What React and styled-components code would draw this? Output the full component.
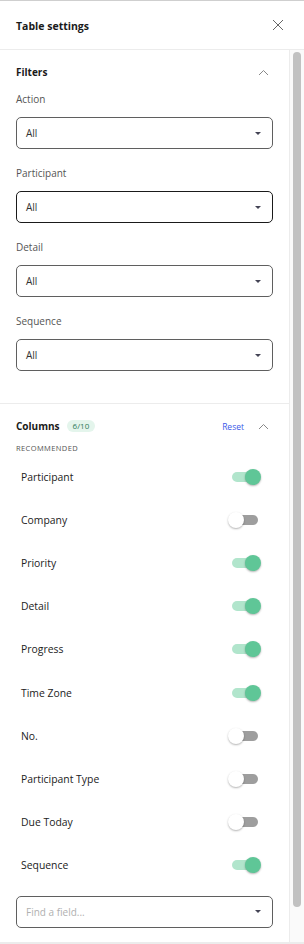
import React from "react";
import styled, { createGlobalStyle } from "styled-components";

const Global = createGlobalStyle`
  html, body { margin: 0; padding: 0; background: #fff; }
  body { font-family: "Open Sans", "Noto Sans", sans-serif; color: #1f1f1f; }
  * { box-sizing: border-box; }
`;

const Panel = styled.div`
  width: 304px;
  height: 944px;
  display: flex;
  flex-direction: column;
  border-top: 1px solid #cfcfcf;
  border-bottom: 2px solid #ececec;
  background: #fff;
`;

const Header = styled.div`
  height: 49px;
  flex: none;
  display: flex;
  align-items: center;
  justify-content: space-between;
  padding: 0 16px;
  border-bottom: 1px solid #ececec;
`;

const Title = styled.div`
  font-size: 10.5px;
  font-weight: 700;
  color: #1a1a1a;
  margin-top: 1px;
`;

const IconButton = styled.button`
  border: 0;
  background: none;
  padding: 0;
  width: 14px;
  height: 14px;
  display: flex;
  align-items: center;
  justify-content: center;
  color: #666;
  margin-right: 3px;
`;

const Body = styled.div`
  flex: 1;
  display: flex;
  min-height: 0;
`;

const Content = styled.div`
  flex: 1;
  display: flex;
  flex-direction: column;
`;

const Section = styled.section`
  padding: ${(p) => p.$pad};
  border-bottom: ${(p) => (p.$divider ? "1px solid #ececec" : "none")};
`;

const SectionHead = styled.div`
  height: ${(p) => p.$h}px;
  display: flex;
  align-items: center;
  gap: 7px;
`;

const SectionTitle = styled.div`
  font-size: 10px;
  font-weight: 700;
  color: #1a1a1a;
`;

const Badge = styled.span`
  font-size: 8px;
  color: #2c7a56;
  background: #e4f5ec;
  border-radius: 6px;
  padding: 0 6px;
  height: 12px;
  line-height: 12px;
`;

const Spacer = styled.div`
  flex: 1;
`;

const ResetLink = styled.span`
  font-size: 8.5px;
  color: #3b57e8;
  margin-right: 7px;
`;

const Chevron = styled.span`
  display: flex;
  color: #888;
  margin-right: 4px;
`;

const Field = styled.div`
  margin-top: ${(p) => p.$mt}px;
`;

const Label = styled.div`
  font-size: 10px;
  line-height: 14px;
  color: #555;
  margin-bottom: 11px;
`;

const SelectBox = styled.div`
  height: 32px;
  border: 1px solid ${(p) => (p.$focused ? "#1a1a1a" : "#5f5f5f")};
  border-radius: 5px;
  display: flex;
  align-items: center;
  justify-content: space-between;
  padding: 0 11px 0 9px;
  font-size: 10px;
  color: ${(p) => (p.$placeholder ? "#b0b0b0" : "#333")};
  margin: ${(p) => p.$margin || "0"};
`;

const Caret = styled.span`
  width: 0;
  height: 0;
  border-left: 3.5px solid transparent;
  border-right: 3.5px solid transparent;
  border-top: 3px solid #445;
`;

const SubHeading = styled.div`
  font-size: 7.5px;
  letter-spacing: 0.4px;
  color: #555;
  margin: 7px 0 2px;
  line-height: 10px;
`;

const Row = styled.div`
  height: 43.2px;
  display: flex;
  align-items: center;
  justify-content: space-between;
  padding: 0 12px 0 5px;
  font-size: 10.4px;
  color: #222;
`;

const Track = styled.span`
  position: relative;
  width: 26px;
  height: 10px;
  border-radius: 5px;
  background: ${(p) => (p.$on ? "#b1e5cc" : "#9e9e9e")};
  margin-right: 3px;
`;

const Thumb = styled.span`
  position: absolute;
  top: -3px;
  left: ${(p) => (p.$on ? "13px" : "-4px")};
  width: 16px;
  height: 16px;
  border-radius: 50%;
  background: ${(p) => (p.$on ? "#5fc697" : "#fff")};
  box-shadow: 0 1px 2px rgba(0, 0, 0, 0.3);
`;

const Scrollbar = styled.div`
  width: 15px;
  flex: none;
  border-left: 1px solid #ececec;
  background: #fafafa;
  padding: 2px 3px 35px 3px;
  display: flex;
`;

const ScrollThumb = styled.div`
  flex: 1;
  border-radius: 5px;
  background: #c1c1c1;
`;

const filters = [
  { label: "Action" },
  { label: "Participant", focused: true },
  { label: "Detail" },
  { label: "Sequence" },
];

const columns = [
  ["Participant", true],
  ["Company", false],
  ["Priority", true],
  ["Detail", true],
  ["Progress", true],
  ["Time Zone", true],
  ["No.", false],
  ["Participant Type", false],
  ["Due Today", false],
  ["Sequence", true],
];

const ChevronUp = () => (
  <Chevron>
    <svg width="11" height="7" viewBox="0 0 11 7" fill="none">
      <path d="M1 6L5.5 1.5L10 6" stroke="currentColor" strokeWidth="1" />
    </svg>
  </Chevron>
);

const Toggle = ({ on }) => (
  <Track $on={on}>
    <Thumb $on={on} />
  </Track>
);

export default function App() {
  return (
    <>
      <Global />
      <Panel>
        <Header>
          <Title>Table settings</Title>
          <IconButton aria-label="close">
            <svg width="12" height="12" viewBox="0 0 12 12">
              <path d="M1 1L11 11M11 1L1 11" stroke="#666" strokeWidth="1" />
            </svg>
          </IconButton>
        </Header>
        <Body>
          <Content>
            <Section $pad="14px 16px 32px" $divider>
              <SectionHead $h={16}>
                <SectionTitle>Filters</SectionTitle>
                <Spacer />
                <ChevronUp />
              </SectionHead>
              {filters.map((f, i) => (
                <Field key={f.label} $mt={i === 0 ? 12 : 17}>
                  <Label>{f.label}</Label>
                  <SelectBox $focused={f.focused}>
                    All
                    <Caret />
                  </SelectBox>
                </Field>
              ))}
            </Section>
            <Section $pad="12px 16px 0">
              <SectionHead $h={20}>
                <SectionTitle>Columns</SectionTitle>
                <Badge>6/10</Badge>
                <Spacer />
                <ResetLink>Reset</ResetLink>
                <ChevronUp />
              </SectionHead>
              <SubHeading>RECOMMENDED</SubHeading>
              {columns.map(([name, on]) => (
                <Row key={name}>
                  {name}
                  <Toggle on={on} />
                </Row>
              ))}
              <SelectBox $placeholder $margin="9px 0 0">
                Find a field...
                <Caret />
              </SelectBox>
            </Section>
          </Content>
          <Scrollbar>
            <ScrollThumb />
          </Scrollbar>
        </Body>
      </Panel>
    </>
  );
}
